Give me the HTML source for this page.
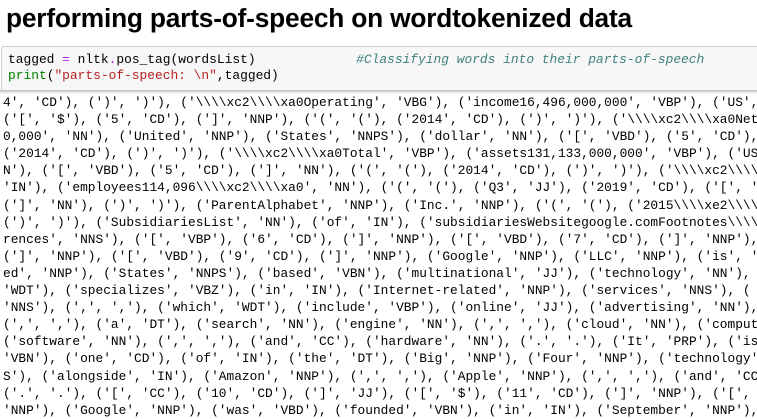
<!DOCTYPE html>
<html><head><meta charset="utf-8"><style>
body{margin:0;width:757px;height:418px;overflow:hidden;background:#fff;position:relative}
h1{position:absolute;left:6px;top:0;margin:0;font:bold 26.3px/36px "Liberation Sans",sans-serif;color:#000;letter-spacing:-0.2px}
.in{position:absolute;left:1px;top:46px;width:760px;height:43px;background:#f7f7f7;border:1px solid #cfcfcf;border-radius:2px}
.code{position:absolute;left:8px;top:52px;font:12.9px/16px "Liberation Mono",monospace;white-space:pre;color:#000}
.g{color:#008000}.p{color:#aa22ff}.r{color:#ba2121}.c{color:#408080;font-style:italic}
.sh{position:absolute;left:0;top:90px;width:757px;height:4px;background:linear-gradient(#bbb,#fff)}
.out{position:absolute;left:3px;top:94px;font:12.85px/17.1px "Liberation Mono",monospace;white-space:pre;color:#000}
</style></head><body>
<h1>performing parts-of-speech on wordtokenized data</h1>
<div class="in"></div>
<div class="code">tagged <span class="p">=</span> nltk<span class="p">.</span>pos_tag(wordsList)             <span class="c">#Classifying words into their parts-of-speech</span>
<span class="g">print</span>(<span class="r">"parts-of-speech: \n"</span>,tagged)</div>
<div class="sh"></div>
<div class="out">4', 'CD'), (')', ')'), ('\\\\xc2\\\\xa0Operating', 'VBG'), ('income16,496,000,000', 'VBP'), ('US',
('[', '$'), ('5', 'CD'), (']', 'NNP'), ('(', '('), ('2014', 'CD'), (')', ')'), ('\\\\xc2\\\\xa0Net
0,000', 'NN'), ('United', 'NNP'), ('States', 'NNPS'), ('dollar', 'NN'), ('[', 'VBD'), ('5', 'CD'),
('2014', 'CD'), (')', ')'), ('\\\\xc2\\\\xa0Total', 'VBP'), ('assets131,133,000,000', 'VBP'), ('US
N'), ('[', 'VBD'), ('5', 'CD'), (']', 'NN'), ('(', '('), ('2014', 'CD'), (')', ')'), ('\\\\xc2\\\\
'IN'), ('employees114,096\\\\xc2\\\\xa0', 'NN'), ('(', '('), ('Q3', 'JJ'), ('2019', 'CD'), ('[', '
(']', 'NN'), (')', ')'), ('ParentAlphabet', 'NNP'), ('Inc.', 'NNP'), ('(', '('), ('2015\\\\xe2\\\\
(')', ')'), ('SubsidiariesList', 'NN'), ('of', 'IN'), ('subsidiariesWebsitegoogle.comFootnotes\\\\
rences', 'NNS'), ('[', 'VBP'), ('6', 'CD'), (']', 'NNP'), ('[', 'VBD'), ('7', 'CD'), (']', 'NNP'),
(']', 'NNP'), ('[', 'VBD'), ('9', 'CD'), (']', 'NNP'), ('Google', 'NNP'), ('LLC', 'NNP'), ('is', '
ed', 'NNP'), ('States', 'NNPS'), ('based', 'VBN'), ('multinational', 'JJ'), ('technology', 'NN'),
'WDT'), ('specializes', 'VBZ'), ('in', 'IN'), ('Internet-related', 'NNP'), ('services', 'NNS'), (
'NNS'), (',', ','), ('which', 'WDT'), ('include', 'VBP'), ('online', 'JJ'), ('advertising', 'NN'),
(',', ','), ('a', 'DT'), ('search', 'NN'), ('engine', 'NN'), (',', ','), ('cloud', 'NN'), ('comput
('software', 'NN'), (',', ','), ('and', 'CC'), ('hardware', 'NN'), ('.', '.'), ('It', 'PRP'), ('is
'VBN'), ('one', 'CD'), ('of', 'IN'), ('the', 'DT'), ('Big', 'NNP'), ('Four', 'NNP'), ('technology'
S'), ('alongside', 'IN'), ('Amazon', 'NNP'), (',', ','), ('Apple', 'NNP'), (',', ','), ('and', 'CC
('.', '.'), ('[', 'CC'), ('10', 'CD'), (']', 'JJ'), ('[', '$'), ('11', 'CD'), (']', 'NNP'), ('[',
'NNP'), ('Google', 'NNP'), ('was', 'VBD'), ('founded', 'VBN'), ('in', 'IN'), ('September', 'NNP'),</div>
</body></html>
